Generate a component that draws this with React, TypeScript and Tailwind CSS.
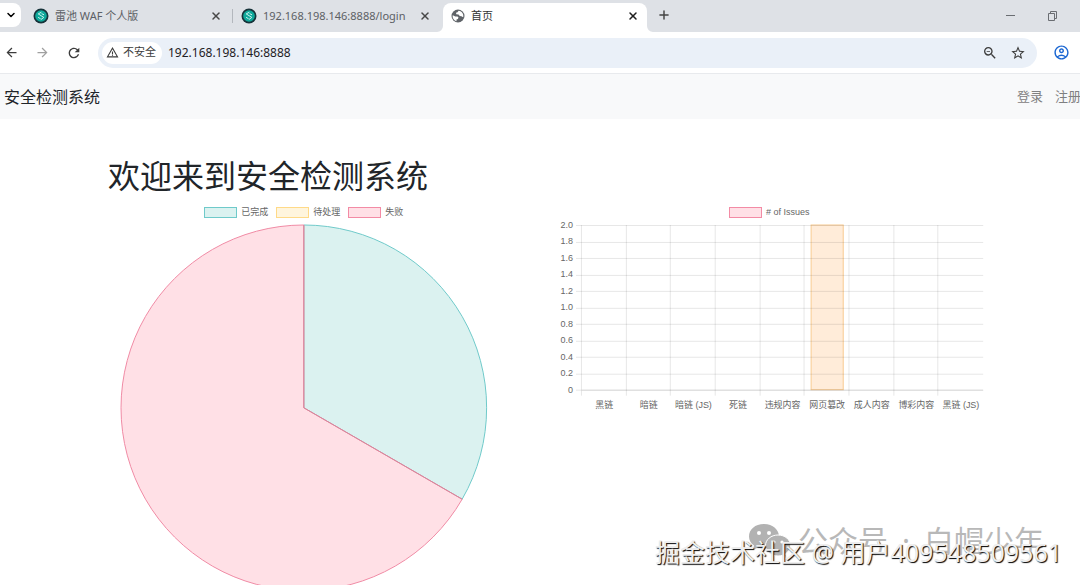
import type { ReactNode } from "react";
import { ChevronDown, Plus, X } from "lucide-react";
import {
    MdArrowBack,
    MdArrowForward,
    MdOutlineAccountCircle,
    MdRefresh,
    MdStarBorder,
    MdWarningAmber,
    MdZoomOut,
} from "react-icons/md";

type TabProps = {
    title: string;
    icon: ReactNode;
    active?: boolean;
    className: string;
};

const issueLabels = [
    "黑链",
    "暗链",
    "暗链 (JS)",
    "死链",
    "违规内容",
    "网页篡改",
    "成人内容",
    "博彩内容",
    "黑链 (JS)",
];
const issueCounts = [0, 0, 0, 0, 0, 2, 0, 0, 0];
const ticks = ["2.0", "1.8", "1.6", "1.4", "1.2", "1.0", "0.8", "0.6", "0.4", "0.2", "0"];

function SafeLineIcon() {
    return (
        <svg viewBox="0 0 16 16" className="size-4 shrink-0">
            <circle cx="8" cy="8" r="7.5" fill="#17333a" />
            <circle cx="8" cy="8" r="5.8" fill="#0fa99b" />
            <path
                d="M8.4 4.2 5.2 5.900l5.600 3.500-2.900 2.200M11 6.800 8.600 5.600M5.100 9.300l2.500 1.500"
                fill="none"
                stroke="#c9f3ee"
                strokeWidth="1"
            />
        </svg>
    );
}

function GlobeIcon() {
    return (
        <svg viewBox="0 0 14 14" className="size-3.5 shrink-0">
            <circle cx="7" cy="7" r="6.5" fill="#5f6368" />
            <path
                d="M1.8 6.2 4.3 7.4h2.2l1 1.2-.6 1.5-1.4.4v1.7C3.2 11.5 1.5 9.5 1.6 7ZM7.6 1.7 6.5 3.3 5 3.7l.3 1.5 2.2.2 1.3 1.7 1.6.2 1.8 1c.8-3-1-6-4.6-6.6Z"
                fill="#ffffff"
            />
        </svg>
    );
}

function Tab({ title, icon, active, className }: TabProps) {
    return (
        <div
            className={`flex items-center h-[26px] ${className} ${
                active ? "text-[#333333]" : "text-[#5c6065]"
            }`}
        >
            <button className="flex flex-1 min-w-0 items-center gap-1.5 text-[11px] whitespace-nowrap">
                {icon}
                {title}
            </button>
            <button
                aria-label="关闭"
                className={active ? "text-[#1f1f1f]" : "text-[#474747]"}
            >
                <X size={12} strokeWidth={3} />
            </button>
        </div>
    );
}

function TabBar() {
    return (
        <div className="flex items-end h-8 bg-[#dee1e6]">
            <button
                aria-label="搜索标签页"
                className="flex items-center justify-center self-start mt-[3px] w-[21px] h-6 bg-white rounded-r-lg"
            >
                <ChevronDown size={12} strokeWidth={3} />
            </button>
            <div className="flex items-center pb-[3px]">
                <Tab
                    title="雷池 WAF 个人版"
                    icon={<SafeLineIcon />}
                    className="w-[211px] pl-3 pr-2.5"
                />
                <div className="w-px h-3.5 bg-[#b3b7bd]" />
                <Tab
                    title="192.168.198.146:8888/login"
                    icon={<SafeLineIcon />}
                    className="w-[210px] pl-2 pr-3"
                />
            </div>
            <div className="relative bg-white rounded-t-lg h-[29px] w-[204px]">
                <Tab
                    title="首页"
                    icon={<GlobeIcon />}
                    active
                    className="pl-2 pr-2"
                />
                <svg
                    viewBox="0 0 6 6"
                    fill="#ffffff"
                    className="absolute right-full bottom-0 size-1.5"
                >
                    <path d="M6 0v6H0a6 6 0 0 0 6-6Z" />
                </svg>
                <svg
                    viewBox="0 0 6 6"
                    fill="#ffffff"
                    className="absolute left-full bottom-0 size-1.5"
                >
                    <path d="M0 0v6h6A6 6 0 0 1 0 0Z" />
                </svg>
            </div>
            <button aria-label="新标签页" className="mb-2.5 ml-2.5 text-[#444444]">
                <Plus size={14} strokeWidth={2.5} />
            </button>
            <div className="flex items-center self-center gap-8 ml-auto mr-[22px] text-[#6a6d72]">
                <button aria-label="最小化">
                    <svg viewBox="0 0 10 10" className="size-2.5">
                        <path d="M0 4.5h9" stroke="currentColor" />
                    </svg>
                </button>
                <button aria-label="还原">
                    <svg viewBox="0 0 10 10" className="size-2.5" fill="none" stroke="currentColor">
                        <path d="M.5 2.5h6v7h-6zM2.5 2.5v-2h6v7h-2" />
                    </svg>
                </button>
            </div>
        </div>
    );
}

function Toolbar() {
    return (
        <div className="flex items-center h-[42px] pl-1 pr-2.5 bg-white border-b border-[#e8eaed] text-[#3c3c3c]">
            <div className="flex items-center gap-4">
                <button aria-label="后退">
                    <MdArrowBack size={15} />
                </button>
                <button aria-label="前进" className="text-[#a0a0a0]">
                    <MdArrowForward size={15} />
                </button>
                <button aria-label="重新加载">
                    <MdRefresh size={16} />
                </button>
            </div>
            <div className="flex flex-1 items-center h-[30px] mx-4 px-1 rounded-full bg-[#eaf0f8]">
                <button className="flex items-center gap-1 h-[22px] pl-1 pr-1.5 rounded-full bg-white text-[11px]">
                    <MdWarningAmber size={13} />
                    不安全
                </button>
                <input
                    aria-label="地址"
                    defaultValue="192.168.198.146:8888"
                    className="flex-1 ml-1.5 text-xs text-[#1f2124] outline-none"
                />
                <button aria-label="缩放" className="mr-3">
                    <MdZoomOut size={16} />
                </button>
                <button aria-label="收藏" className="mr-[7px]">
                    <MdStarBorder size={16} />
                </button>
            </div>
            <button aria-label="个人资料" className="text-[#1a66d2]">
                <MdOutlineAccountCircle size={17} />
            </button>
        </div>
    );
}

function LegendItem({ label, box }: { label: string; box: string }) {
    return (
        <span className="flex items-center gap-1 whitespace-nowrap">
            <span className={`w-[33px] h-[11px] border ${box}`} />
            {label}
        </span>
    );
}

function StatusChart() {
    return (
        <section>
            <div className="flex justify-center gap-2 h-4 text-[9px] leading-4 text-[#666666]">
                <LegendItem label="已完成" box="bg-[#dbf2f0] border-[#6fcaca]" />
                <LegendItem label="待处理" box="bg-[#fff5dd] border-[#ffda88]" />
                <LegendItem label="失败" box="bg-[#ffe0e6] border-[#f38ba5]" />
            </div>
            <svg viewBox="0 0 392 376" className="block w-full">
                <path
                    d="M196 188V5A183 183 0 0 1 354.5 279.5Z"
                    fill="#dbf2f0"
                    stroke="#6fcaca"
                />
                <path
                    d="M196 188 354.5 279.5A183 183 0 1 1 196 5Z"
                    fill="#ffe0e6"
                    stroke="#f08ba5"
                />
                <path d="M196 5V188L354.5 279.5" fill="none" stroke="#d9869b" />
            </svg>
        </section>
    );
}

function IssuesChart() {
    const left = 26;
    const top = 5;
    const plotWidth = 402;
    const plotHeight = 165;
    const column = plotWidth / issueLabels.length;

    return (
        <section>
            <div className="flex justify-center h-4 text-[9px] leading-4 text-[#666666]">
                <LegendItem label="# of Issues" box="bg-[#ffe0e6] border-[#f38ba5]" />
            </div>
            <svg viewBox="0 0 428 200" className="block w-full overflow-visible">
                {issueCounts.map((count, index) =>
                    count > 0 ? (
                        <rect
                            key={issueLabels[index]}
                            x={left + index * column + column * 0.14}
                            y={top + plotHeight * (1 - count / 2)}
                            width={column * 0.72}
                            height={(plotHeight * count) / 2}
                            fill="#ffecd9"
                            stroke="#f8cb91"
                        />
                    ) : null
                )}
                <g stroke="#000000" strokeOpacity="0.1">
                    {ticks.map((tick, index) => {
                        const y = Math.round(top + (index * plotHeight) / 10) + 0.5;
                        return <path key={tick} d={`M${left - 6} ${y}H${left + plotWidth}`} />;
                    })}
                    {issueLabels.map((label, index) => {
                        const x = Math.round(left + index * column) - 0.5;
                        return <path key={index} d={`M${x} ${top}V${top + plotHeight + 6}`} />;
                    })}
                    <path d={`M${left} ${top + plotHeight + 0.5}h${plotWidth}`} />
                </g>
                <g fill="#666666" fontSize="9">
                    {ticks.map((tick, index) => (
                        <text
                            key={tick}
                            x={left - 9}
                            y={top + (index * plotHeight) / 10 + 3}
                            textAnchor="end"
                        >
                            {tick}
                        </text>
                    ))}
                    {issueLabels.map((label, index) => (
                        <text
                            key={index}
                            x={left + (index + 0.5) * column}
                            y={top + plotHeight + 18}
                            textAnchor="middle"
                        >
                            {label}
                        </text>
                    ))}
                </g>
            </svg>
        </section>
    );
}

function Watermark() {
    return (
        <div className="absolute right-0 bottom-0 w-[430px] h-20 whitespace-nowrap">
            <div className="absolute left-[98px] top-4 flex items-center gap-1.5 text-[30px] leading-10 text-[#b8b8b8]">
                <svg viewBox="0 0 44 36" className="w-11 h-9">
                    <path
                        d="M16 1C7 1 1 6.5 1 13.5c0 4 2 7 5 9L5 27l5-2.5c2 .6 4 .9 6 .9C25 25.4 31 20 31 13.5S25 1 16 1Z"
                        fill="#b2b2b2"
                    />
                    <path
                        d="M30 12c-7 0-12.5 4.7-12.5 10.5S23 33 30 33c1.6 0 3-.2 4.500-.7l4 2.200-1-3.700c3-2 5-5 5-8.300C42.500 16.700 37 12 30 12Z"
                        fill="#b2b2b2"
                        stroke="#ffffff"
                    />
                    <g fill="#ffffff">
                        <circle cx="11" cy="10" r="2" />
                        <circle cx="21" cy="10" r="2" />
                        <circle cx="26" cy="19" r="1.6" />
                        <circle cx="34" cy="19" r="1.6" />
                    </g>
                </svg>
                <span className="flex gap-3.5">
                    <span>公众号</span>
                    <span>·</span>
                    <span>白帽少年</span>
                </span>
            </div>
            <div className="absolute right-[18px] top-[31px] text-[25px] leading-8 text-[#eeeeee] [text-shadow:1px_1px_1px_#000000]">
                掘金技术社区 @ 用户409548509561
            </div>
        </div>
    );
}

export default function App() {
    return (
        <div className="relative h-screen overflow-hidden flex flex-col bg-white font-['Noto_Sans','Noto_Sans_CJK_SC',sans-serif]">
            <header>
                <TabBar />
                <Toolbar />
            </header>
            <nav className="flex shrink-0 items-center justify-between h-[45px] pl-1 bg-[#f8f9fa] whitespace-nowrap">
                <a href="#" className="text-base text-[#212529]">
                    安全检测系统
                </a>
                <div className="flex gap-3 -mr-px text-[13px] text-[#7f8081]">
                    <a href="#">登录</a>
                    <a href="#">注册</a>
                </div>
            </nav>
            <main className="flex-1 min-h-0 pt-9 pl-[10%] pr-[9%]">
                <h1 className="text-[32px] leading-[42px] text-[#212529]">欢迎来到安全检测系统</h1>
                <div className="grid grid-cols-[11fr_12fr] gap-14 mt-[7px] font-['Liberation_Sans','Noto_Sans_CJK_SC',sans-serif]">
                    <StatusChart />
                    <IssuesChart />
                </div>
            </main>
            <Watermark />
        </div>
    );
}
